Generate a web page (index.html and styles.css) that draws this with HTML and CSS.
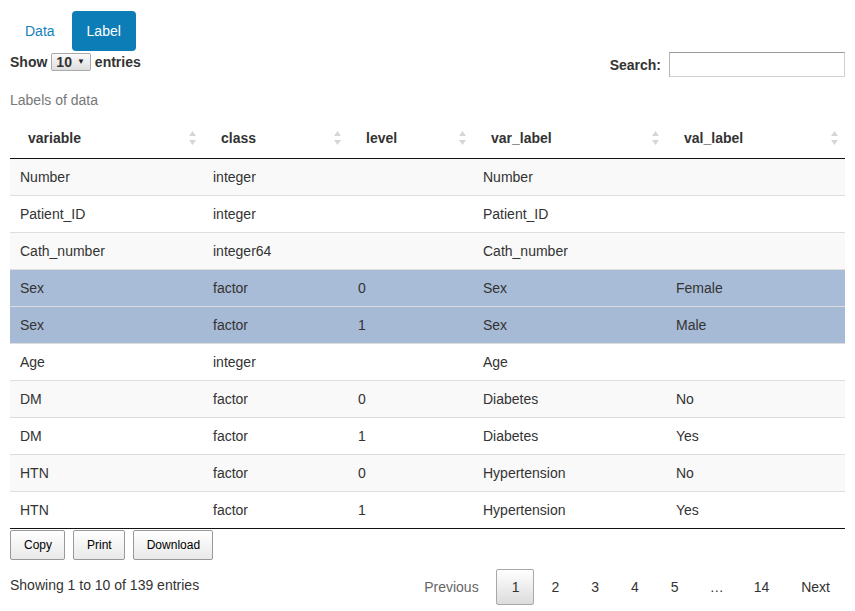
FILE: index.html
```html
<!DOCTYPE html>
<html>
<head>
<meta charset="utf-8">
<link rel="stylesheet" href="styles.css">
</head>
<body>
<div class="page">
  <ul class="nav">
    <li class="tab">Data</li>
    <li class="tab active">Label</li>
  </ul>
  <div class="controls">
    <div class="length">Show <span class="select">10 <span class="caret">&#9660;</span></span> entries</div>
    <div class="filter">Search: <span class="search"></span></div>
  </div>
  <div class="caption">Labels of data</div>
  <table class="dt">
    <colgroup>
      <col style="width:193px"><col style="width:145px"><col style="width:125px"><col style="width:193px"><col style="width:179px">
    </colgroup>
    <thead>
      <tr>
        <th><div class="th">variable<svg class="sort" width="7" height="14" viewBox="0 0 7 14"><path d="M3.5 0 L7 5 L0 5 Z M0 9 L7 9 L3.5 14 Z"/></svg></div></th>
        <th><div class="th">class<svg class="sort" width="7" height="14" viewBox="0 0 7 14"><path d="M3.5 0 L7 5 L0 5 Z M0 9 L7 9 L3.5 14 Z"/></svg></div></th>
        <th><div class="th">level<svg class="sort" width="7" height="14" viewBox="0 0 7 14"><path d="M3.5 0 L7 5 L0 5 Z M0 9 L7 9 L3.5 14 Z"/></svg></div></th>
        <th><div class="th">var_label<svg class="sort" width="7" height="14" viewBox="0 0 7 14"><path d="M3.5 0 L7 5 L0 5 Z M0 9 L7 9 L3.5 14 Z"/></svg></div></th>
        <th><div class="th">val_label<svg class="sort" width="7" height="14" viewBox="0 0 7 14"><path d="M3.5 0 L7 5 L0 5 Z M0 9 L7 9 L3.5 14 Z"/></svg></div></th>
      </tr>
    </thead>
    <tbody>
      <tr class="odd"><td>Number</td><td>integer</td><td></td><td>Number</td><td></td></tr>
      <tr class="even"><td>Patient_ID</td><td>integer</td><td></td><td>Patient_ID</td><td></td></tr>
      <tr class="odd"><td>Cath_number</td><td>integer64</td><td></td><td>Cath_number</td><td></td></tr>
      <tr class="even selected"><td>Sex</td><td>factor</td><td>0</td><td>Sex</td><td>Female</td></tr>
      <tr class="odd selected"><td>Sex</td><td>factor</td><td>1</td><td>Sex</td><td>Male</td></tr>
      <tr class="even"><td>Age</td><td>integer</td><td></td><td>Age</td><td></td></tr>
      <tr class="odd"><td>DM</td><td>factor</td><td>0</td><td>Diabetes</td><td>No</td></tr>
      <tr class="even"><td>DM</td><td>factor</td><td>1</td><td>Diabetes</td><td>Yes</td></tr>
      <tr class="odd"><td>HTN</td><td>factor</td><td>0</td><td>Hypertension</td><td>No</td></tr>
      <tr class="even"><td>HTN</td><td>factor</td><td>1</td><td>Hypertension</td><td>Yes</td></tr>
    </tbody>
  </table>
  <div class="buttons">
    <span class="btn">Copy</span>
    <span class="btn">Print</span>
    <span class="btn">Download</span>
  </div>
  <div class="footer">
    <div class="info">Showing 1 to 10 of 139 entries</div>
    <div class="paginate">
      <span class="pg disabled">Previous</span>
      <span class="pg current">1</span>
      <span class="pg">2</span>
      <span class="pg">3</span>
      <span class="pg">4</span>
      <span class="pg">5</span>
      <span class="ellipsis">&hellip;</span>
      <span class="pg">14</span>
      <span class="pg">Next</span>
    </div>
  </div>
</div>
</body>
</html>
```
FILE: styles.css
```css
* { box-sizing: border-box; }
html, body { margin: 0; padding: 0; background: #fff; }
body {
  font-family: "Liberation Sans", Arial, sans-serif;
  font-size: 14px;
  line-height: 20px;
  color: #333;
}
.page { width: 855px; padding: 11px 10px 0 10px; }

.nav { list-style: none; margin: 0; padding: 0; display: flex; gap: 2px; height: 40px; }
.tab { padding: 10px 15px; border-radius: 4px; color: #1281ba; }
.tab.active { background: #0d7db8; color: #fff; }

.controls { display: flex; justify-content: space-between; align-items: flex-start; height: 26px; }
.length { font-weight: bold; padding-top: 1px; display: flex; align-items: center; gap: 4px; height: 20px; }
.select {
  display: inline-flex; align-items: center; gap: 5px;
  height: 18px; padding: 0 5px 0 4px;
  border: 1px solid #a9a9a9; border-radius: 2px;
  background: linear-gradient(#fafafa, #dedede);
  font-weight: bold; line-height: 16px;
}
.caret { font-size: 8px; line-height: 16px; color: #222; }
.filter { font-weight: bold; display: flex; align-items: center; height: 26px; padding-top: 1px; }
.search {
  display: inline-block; width: 176px; height: 25px; margin-left: 8px;
  border: 1px solid #d0d0d0; border-top-color: #999; border-left-color: #b5b5b5;
  background: #fff;
}

.caption { color: #777; margin-top: 5px; padding: 8px 0; }

.dt { border-collapse: collapse; table-layout: fixed; width: 835px; }
.dt th { padding: 0; font-weight: bold; text-align: left; border-bottom: 1px solid #111; }
.th { display: flex; justify-content: space-between; align-items: center; padding: 10px 7px 10px 18px; height: 40px; }
.sort { fill: #d6d6d6; }
.dt td { padding: 8px 10px; height: 36px; white-space: nowrap; }
.dt tbody tr + tr td { border-top: 1px solid #ddd; }
.dt tbody tr:last-child td { border-bottom: 1px solid #111; height: 37px; }
.dt tr.odd { background: #f9f9f9; }
.dt tr.even { background: #fff; }
.dt tr.even.selected { background: #a9bcd7; }
.dt tr.odd.selected { background: #a7bad5; }

.buttons { display: flex; gap: 8px; margin-top: 1px; }
.btn {
  display: inline-flex; align-items: center; height: 30px; padding: 0 12px 0 13px;
  font-size: 12px; color: #000;
  border: 1px solid #999; border-radius: 2px;
  background: linear-gradient(#fff, #e9e9e9);
}

.footer { display: flex; justify-content: space-between; align-items: flex-start; margin-top: 9px; }
.info { padding-top: 6px; }
.paginate { display: flex; }
.pg {
  display: inline-block; padding: 7px 14px; margin-left: 2px;
  line-height: 20px; text-align: center; border: 1px solid transparent; border-radius: 2px;
  color: #333;
}
.pg.disabled { color: #666; }
.pg.current { border-color: #a8a8a8; background: linear-gradient(#fff, #dcdcdc); padding: 7px 14px 7px 15px; }
.ellipsis { display: inline-block; padding: 8px 13px 8px 14px; margin-left: 2px; line-height: 20px; color: #333; }
```
